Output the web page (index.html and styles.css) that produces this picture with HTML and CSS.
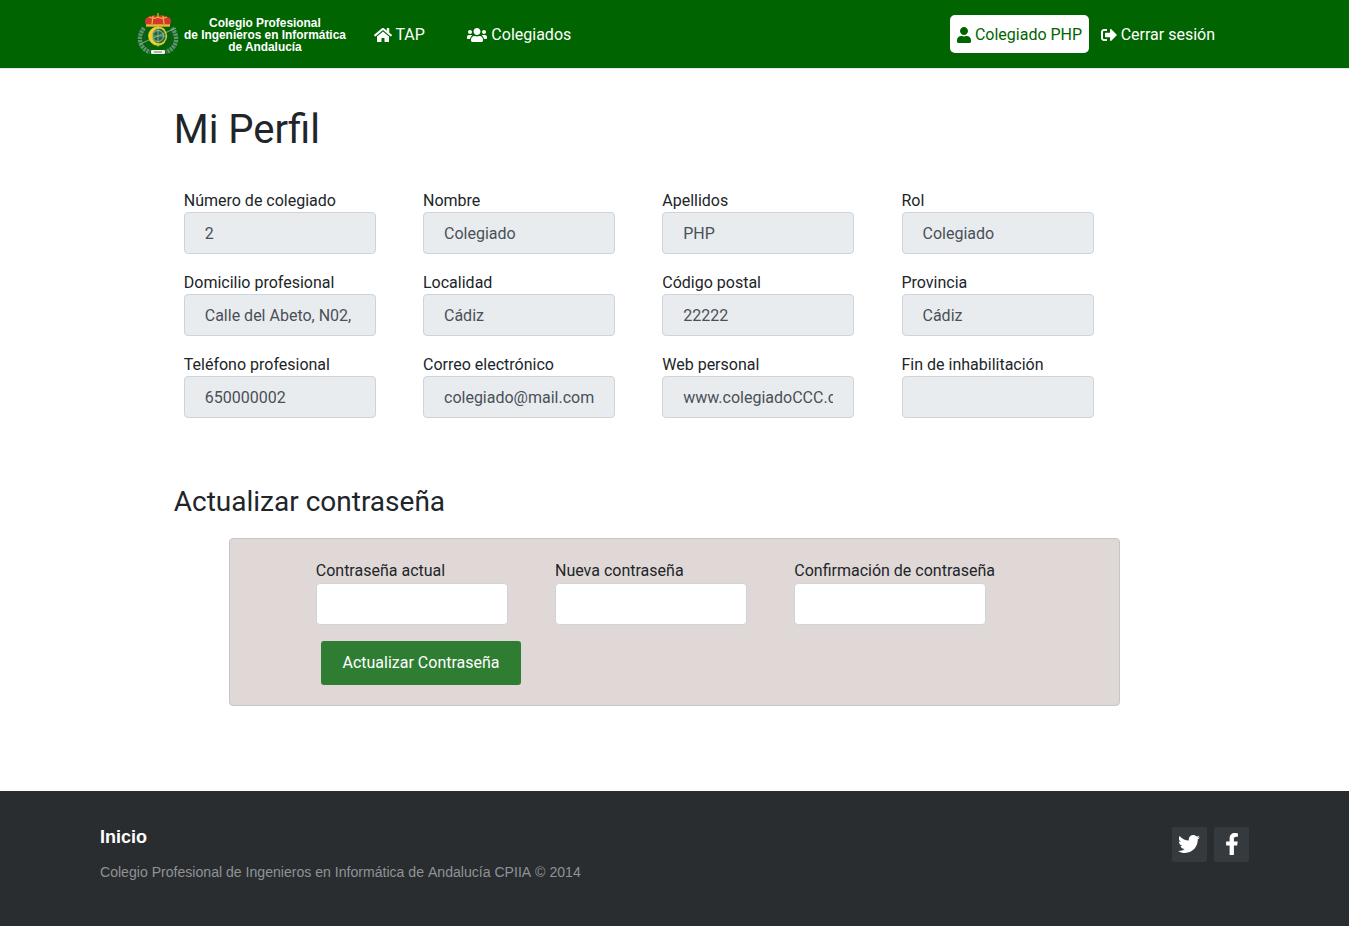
FILE: index.html
```html
<!DOCTYPE html>
<html lang="es">
<head>
<meta charset="utf-8">
<title>Mi Perfil</title>
<link rel="stylesheet" href="styles.css">
</head>
<body>
<header class="navbar">
  <a class="brand" href="#">
    <svg class="crest" viewBox="0 0 42 42" width="42" height="42" aria-hidden="true">
      <path d="M7 15 C0 24 2 35 13 39 M35 15 C42 24 40 35 29 39" fill="none" stroke="#5f9172" stroke-width="4.4" stroke-dasharray="2.4 .8"/>
      <path d="M9 17 C6 25 8 32 14 36 M33 17 C36 25 34 32 28 36" fill="none" stroke="#145a30" stroke-width="1.4"/>
      <path d="M9 12 C7 8 8 4 12 4 C15 2 18 2 21 3 C24 2 27 2 30 4 C34 4 35 8 33 12 Z" fill="#d3382e"/>
      <path d="M21 0 V4 M12 4 C16 6 18 6 21 4 C24 6 26 6 30 4 M16 3 L15 11 M26 3 L27 11" fill="none" stroke="#e9b93e" stroke-width="1.2"/>
      <path d="M9 12.5 H33" stroke="#e6b83c" stroke-width="2.4"/>
      <circle cx="21" cy="23" r="9.5" fill="#1f6a3c"/>
      <path d="M3 31 L39 15 M21 13 V34 M12 23 H30" stroke="#8fae9a" stroke-width=".9"/>
      <circle cx="21" cy="23" r="5.5" fill="none" stroke="#a9c0b1" stroke-width=".9"/>
      <circle cx="21" cy="23" r="8.4" fill="none" stroke="#efd02c" stroke-width="1.3"/>
      <path d="M27.5 16.5 A9.3 9.3 0 1 0 27.5 29.5 A8 8 0 1 1 27.5 16.5 Z" fill="#f0d22e" stroke="#e8c728" stroke-width=".8"/>
      <rect x="14" y="37" width="14" height="4" rx="1" fill="#eef1ee"/>
      <path d="M17 39 H25" stroke="#6b7a70" stroke-width="1"/>
    </svg>
    <span class="brand-text">Colegio Profesional<br>de Ingenieros en Informática<br>de Andalucía</span>
  </a>
  <nav class="nav-main">
    <a class="nav-link" href="#"><svg class="ico ico-home" viewBox="0 0 576 512"><path d="M280.37 148.26L96 300.11V464a16 16 0 0 0 16 16l112.06-.29a16 16 0 0 0 15.92-16V368a16 16 0 0 1 16-16h64a16 16 0 0 1 16 16v95.64a16 16 0 0 0 16 16.05L464 480a16 16 0 0 0 16-16V300L295.67 148.26a12.19 12.19 0 0 0-15.3 0zM571.6 251.47L488 182.56V44.05a12 12 0 0 0-12-12h-56a12 12 0 0 0-12 12v72.61L318.47 43a48 48 0 0 0-61 0L4.34 251.47a12 12 0 0 0-1.6 16.9l25.5 31A12 12 0 0 0 45.15 301l235.22-193.74a12.19 12.19 0 0 1 15.3 0L530.9 301a12 12 0 0 0 16.9-1.6l25.5-31a12 12 0 0 0-1.7-16.93z"/></svg>TAP</a>
    <a class="nav-link" href="#"><svg class="ico ico-users" viewBox="0 0 640 512"><path d="M96 224c35.3 0 64-28.7 64-64s-28.7-64-64-64-64 28.7-64 64 28.7 64 64 64zm448 0c35.3 0 64-28.7 64-64s-28.7-64-64-64-64 28.7-64 64 28.7 64 64 64zm32 32h-64c-17.6 0-33.5 7.1-45.1 18.6 40.3 22.1 68.9 62 75.1 109.4h66c17.7 0 32-14.3 32-32v-32c0-35.3-28.7-64-64-64zm-256 0c61.9 0 112-50.1 112-112S381.9 32 320 32 208 82.1 208 144s50.1 112 112 112zm76.8 32h-8.3c-20.8 10-43.9 16-68.5 16s-47.6-6-68.5-16h-8.3C179.6 288 128 339.6 128 403.2V432c0 26.5 21.5 48 48 48h288c26.5 0 48-21.5 48-48v-28.8c0-63.6-51.6-115.2-115.2-115.2zm-223.7-13.4C161.5 263.1 145.6 256 128 256H64c-35.3 0-64 28.7-64 64v32c0 17.7 14.3 32 32 32h65.9c6.3-47.4 34.9-87.3 75.2-109.4z"/></svg>Colegiados</a>
  </nav>
  <nav class="nav-user">
    <a class="user-pill" href="#"><svg class="ico ico-user" viewBox="0 0 448 512"><path d="M224 256c70.7 0 128-57.3 128-128S294.7 0 224 0 96 57.3 96 128s57.3 128 128 128zm89.6 32h-16.7c-22.2 10.2-46.9 16-72.9 16s-50.6-5.8-72.9-16h-16.7C60.2 288 0 348.2 0 422.4V464c0 26.5 21.5 48 48 48h352c26.5 0 48-21.5 48-48v-41.6c0-74.2-60.2-134.4-134.4-134.4z"/></svg>Colegiado PHP</a>
    <a class="nav-link" href="#"><svg class="ico ico-out" viewBox="0 0 512 512"><path d="M497 273L329 441c-15 15-41 4.5-41-17v-96H152c-13.3 0-24-10.7-24-24v-96c0-13.3 10.7-24 24-24h136V88c0-21.4 25.9-32 41-17l168 168c9.3 9.4 9.3 24.6 0 34zM192 436v-40c0-6.6-5.4-12-12-12H96c-17.7 0-32-14.3-32-32V160c0-17.7 14.3-32 32-32h84c6.6 0 12-5.4 12-12V76c0-6.6-5.4-12-12-12H96c-53 0-96 43-96 96v192c0 53 43 96 96 96h84c6.6 0 12-5.4 12-12z"/></svg>Cerrar sesión</a>
  </nav>
</header>

<main class="content">
  <h1 class="page-title">Mi Perfil</h1>
  <form class="profile-grid">
    <div class="field"><label>Número de colegiado</label><input class="control" readonly value="2"></div>
    <div class="field"><label>Nombre</label><input class="control" readonly value="Colegiado"></div>
    <div class="field"><label>Apellidos</label><input class="control" readonly value="PHP"></div>
    <div class="field"><label>Rol</label><input class="control" readonly value="Colegiado"></div>
    <div class="field"><label>Domicilio profesional</label><input class="control" readonly value="Calle del Abeto, N02,"></div>
    <div class="field"><label>Localidad</label><input class="control" readonly value="Cádiz"></div>
    <div class="field"><label>Código postal</label><input class="control" readonly value="22222"></div>
    <div class="field"><label>Provincia</label><input class="control" readonly value="Cádiz"></div>
    <div class="field"><label>Teléfono profesional</label><input class="control" readonly value="650000002"></div>
    <div class="field"><label>Correo electrónico</label><input class="control" readonly value="colegiado@mail.com"></div>
    <div class="field"><label>Web personal</label><input class="control" readonly value="www.colegiadoCCC.com"></div>
    <div class="field"><label>Fin de inhabilitación</label><input class="control" readonly value=""></div>
  </form>

  <h2 class="section-title">Actualizar contraseña</h2>
  <form class="password-card">
    <div class="password-grid">
      <div class="field"><label>Contraseña actual</label><input class="control control-edit" type="password"></div>
      <div class="field"><label>Nueva contraseña</label><input class="control control-edit" type="password"></div>
      <div class="field"><label>Confirmación de contraseña</label><input class="control control-edit" type="password"></div>
    </div>
    <button class="btn-save" type="button">Actualizar Contraseña</button>
  </form>
</main>

<footer class="footer">
  <div class="footer-info">
    <a class="footer-home" href="#">Inicio</a>
    <p class="footer-copy">Colegio Profesional de Ingenieros en Informática de Andalucía CPIIA © 2014</p>
  </div>
  <div class="social">
    <a class="social-btn" href="#"><svg class="ico-tw" viewBox="0 0 512 512"><path d="M459.37 151.716c.325 4.548.325 9.097.325 13.645 0 138.72-105.583 298.558-298.558 298.558-59.452 0-114.68-17.219-161.137-47.106 8.447.974 16.568 1.299 25.34 1.299 49.055 0 94.213-16.568 130.274-44.832-46.132-.975-84.792-31.188-98.112-72.772 6.498.974 12.995 1.624 19.818 1.624 9.421 0 18.843-1.3 27.614-3.573-48.081-9.747-84.143-51.98-84.143-102.985v-1.299c13.969 7.797 30.214 12.67 47.431 13.319-28.264-18.843-46.781-51.005-46.781-87.391 0-19.492 5.197-37.36 14.294-52.954 51.655 63.675 129.3 105.258 216.365 109.807-1.624-7.797-2.599-15.918-2.599-24.04 0-57.828 46.782-104.934 104.934-104.934 30.213 0 57.502 12.67 76.67 33.137 23.715-4.548 46.456-13.32 66.599-25.34-7.798 24.366-24.366 44.833-46.132 57.827 21.117-2.273 41.584-8.122 60.426-16.243-14.292 20.791-32.161 39.308-52.628 54.253z"/></svg></a>
    <a class="social-btn" href="#"><svg class="ico-fb" viewBox="0 0 320 512"><path d="M279.14 288l14.22-92.66h-88.91v-60.13c0-25.35 12.42-50.06 52.24-50.06h40.42V6.26S260.43 0 225.36 0c-73.22 0-121.08 44.38-121.08 124.72v70.62H22.89V288h81.39v224h100.17V288z"/></svg></a>
  </div>
</footer>
</body>
</html>
```
FILE: styles.css
```css
* { box-sizing: border-box; }
html, body { margin: 0; padding: 0; }
body {
  font-family: Roboto, "Liberation Sans", sans-serif;
  font-size: 16px;
  line-height: 24px;
  color: #212529;
  background: #fff;
  min-height: 926px;
  display: flex;
  flex-direction: column;
}
a { text-decoration: none; }

.navbar {
  height: 69px;
  flex: none;
  background: #006400;
  border-bottom: 1px solid #e7e7e7;
  padding: 1px 134px 0 137px;
  display: flex;
  align-items: center;
  color: #fff;
}
.brand { display: flex; align-items: center; color: #fff; margin-right: 28px; }
.crest { flex: none; margin: -1px 5px 0 0; }
.brand-text {
  font-family: "Liberation Sans", Arial, sans-serif;
  font-weight: 700;
  font-size: 11.9px;
  line-height: 12px;
  text-align: center;
  white-space: nowrap;
}
.nav-main { display: flex; gap: 42.5px; }
.nav-user { display: flex; align-items: center; margin-left: auto; gap: 12px; }
.nav-link { display: flex; align-items: center; color: #fff; white-space: nowrap; }
.ico { fill: currentColor; height: 16px; flex: none; }
.ico-home { width: 18px; margin-right: 3.5px; }
.ico-users { width: 20px; margin-right: 4px; }
.ico-user { width: 14px; margin-right: 4px; }
.ico-out { width: 16px; margin-right: 4px; }
.user-pill {
  display: flex;
  align-items: center;
  height: 38px;
  margin-top: -1px;
  padding: 2px 6.5px 0 7px;
  background: #fff;
  color: #006400;
  border-radius: 5px;
  white-space: nowrap;
}

.content { flex: 1; padding: 0 174.25px 0 173.75px; }
.page-title {
  margin: 33px 0 0;
  font-size: 40px;
  line-height: 56px;
  font-weight: 400;
}
.profile-grid {
  margin: 30px 0 0 10px;
  display: grid;
  grid-template-columns: repeat(4, 192px);
  column-gap: 47.25px;
  row-gap: 16px;
}
.field { display: flex; flex-direction: column; min-width: 0; }
.field label { display: block; padding-top: 1px; line-height: 24px; white-space: nowrap; }
.profile-grid .field label { padding-top: 2px; line-height: 22px; }
.control {
  display: block;
  width: 192px;
  height: 42px;
  padding: 0 20px;
  font: inherit;
  color: #495057;
  background: #e9ecef;
  border: 1px solid #ced4da;
  border-radius: 4px;
  outline: none;
}
.control-edit { background: #fff; }

.section-title {
  margin: 66px 0 0;
  font-size: 28px;
  line-height: 36px;
  font-weight: 400;
}
.password-card {
  margin: 18px 55.25px 0;
  height: 168px;
  background: #e0d8d7;
  border: 1px solid #c9c5c4;
  border-radius: 4px;
  padding: 19px 0 0 85.75px;
}
.password-grid {
  display: grid;
  grid-template-columns: repeat(3, 192px);
  column-gap: 47.25px;
}
.btn-save {
  display: block;
  margin: 16px 0 0 5.25px;
  width: 200px;
  height: 44px;
  font: inherit;
  color: #fff;
  background: #2e7d32;
  border: none;
  border-radius: 3px;
}

.footer {
  flex: none;
  height: 135px;
  background: #292d30;
  padding: 36px 100px 0;
  display: flex;
  justify-content: space-between;
  align-items: flex-start;
}
.footer-home {
  display: block;
  color: #fff;
  font-family: "Liberation Sans", Arial, sans-serif;
  font-size: 18px;
  line-height: 21px;
  font-weight: 700;
}
.footer-copy {
  margin: 14px 0 0;
  font-family: "Liberation Sans", Arial, sans-serif;
  font-size: 14.09px;
  line-height: 20px;
  color: #8f9396;
  font-kerning: none;
}
.social { display: flex; gap: 7px; }
.social-btn {
  width: 35px;
  height: 35px;
  display: flex;
  align-items: center;
  justify-content: center;
  background: #343a3d;
  border-radius: 2px;
  color: #fff;
}
.social-btn svg { fill: currentColor; }
.ico-tw { width: 22px; height: 22px; margin-top: -1px; margin-left: -1px; }
.ico-fb { width: 14px; height: 22px; margin-top: -1px; }
```
